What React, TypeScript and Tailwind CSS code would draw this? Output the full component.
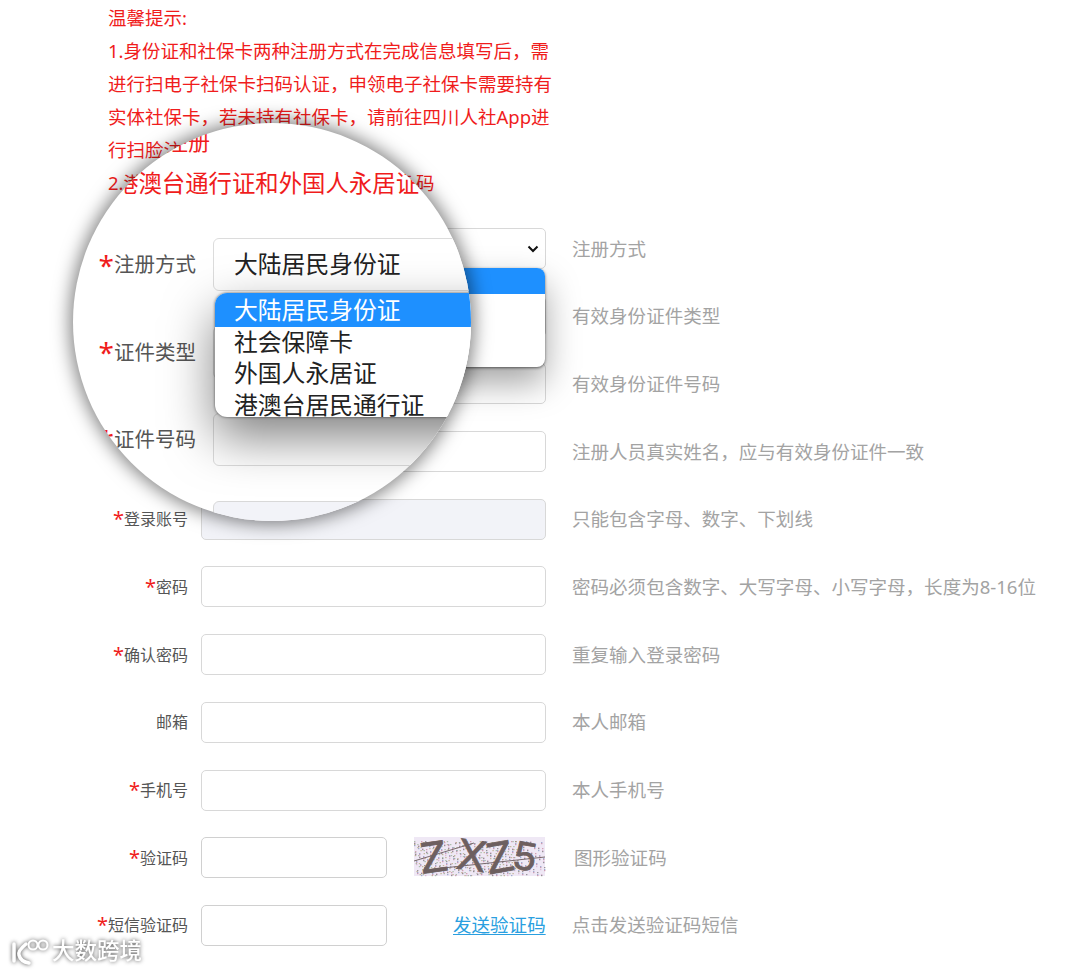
const rows = [
  { label: '注册方式', hint: '注册方式', required: true },
  { label: '证件类型', hint: '有效身份证件类型', required: true },
  { label: '证件号码', hint: '有效身份证件号码', required: true },
  { label: '姓名', hint: '注册人员真实姓名，应与有效身份证件一致', required: true },
  { label: '登录账号', hint: '只能包含字母、数字、下划线', required: true, disabled: true },
  { label: '密码', hint: '密码必须包含数字、大写字母、小写字母，长度为8-16位', required: true },
  { label: '确认密码', hint: '重复输入登录密码', required: true },
  { label: '邮箱', hint: '本人邮箱', required: false },
  { label: '手机号', hint: '本人手机号', required: true },
]

const options = ['社会保障卡', '外国人永居证', '港澳台居民通行证']

// fixed scatter so the captcha noise is the same on every render
const noise = Array.from({ length: 640 }, (_, i) => ({
  x: ((i * 37) % 131) * (i % 3 === 0 ? 0.8 : 1),
  y: 4 + (i * 61 + (i % 7) * 5) % 35,
  c: ['#7fa37c', '#c0708a', '#6a86b8', '#a8965e', '#5c5c5c', '#d0a0c0'][i % 6],
}))

function Label({ text, required }: { text: string; required: boolean }) {
  return (
    <label className="flex items-center justify-end whitespace-nowrap text-[16px] text-[#555]">
      {required && <span className="text-[20px] leading-none text-[#f01c1c]">*</span>}
      {text}
    </label>
  )
}

function Captcha() {
  return (
    <svg width="131" height="39" viewBox="0 0 131 39" className="overflow-visible bg-[#efe8f5]">
      {noise.map((n, i) => (
        <rect key={i} x={n.x} y={n.y} width="1.4" height="1.2" fill={n.c} opacity="0.6" />
      ))}
      <path d="M0 24 L60 6 M20 32 L131 20" stroke="#77686c" strokeWidth="1" fill="none" />
      <g fill="#6d5f60" stroke="#6d5f60" strokeWidth="0.8" fontFamily="Liberation Sans" fontSize="44">
        <text x="6" y="35" transform="rotate(-8 20 20)">Z</text>
        <text x="43" y="33" transform="rotate(8 55 20)">X</text>
        <text x="72" y="36" transform="rotate(-10 80 20)">Z</text>
        <text x="100" y="33" transform="rotate(10 112 20)" fontSize="40">5</text>
      </g>
    </svg>
  )
}

function Lens() {
  return (
    <div className="absolute left-[73px] top-[123px] z-20 h-[398px] w-[398px] overflow-hidden rounded-full bg-white shadow-[0_0_18px_3px_rgba(0,0,0,0.5)]">
      <span className="absolute left-[93px] top-[7px] whitespace-nowrap text-[22px] leading-[22px] text-[#f01c1c]">
        注册
      </span>
      <span className="absolute left-[42px] top-[44px] whitespace-nowrap text-[23.4px] leading-[32px] text-[#f01c1c]">
        港澳台通行证和外国人永居证
      </span>
      <div className="flex flex-col gap-y-[34.5px] pt-[115px]">
        {['注册方式', '证件类型', '证件号码'].map((text) => (
          <div key={text} className="grid h-[53px] grid-cols-[123px_500px] gap-x-[17px]">
            <label className="flex items-center justify-end whitespace-nowrap text-[20.5px] text-[#555]">
              <span className="text-[28px] leading-none text-[#f01c1c]">*</span>
              {text}
            </label>
            <div className="flex items-center rounded-md border border-[#dcdcdc] bg-white pl-5 pt-px text-[23.8px] text-[#222]">
              {text === '注册方式' && '大陆居民身份证'}
            </div>
          </div>
        ))}
        <div className="ml-[140px] h-[53px] w-[500px] rounded-md border border-[#d8d8d8] bg-[#f2f3f8]" />
      </div>
      <div className="absolute left-[142px] top-[170px] h-[124px] w-[500px] overflow-hidden rounded-xl bg-white text-[23.8px] leading-[31.5px] text-[#222] shadow-[0_0_3px_rgba(0,0,0,0.6),0_20px_50px_rgba(0,0,0,0.5)]">
        <div className="bg-[#1e90ff] pl-[19px] pt-[2px] text-white">大陆居民身份证</div>
        {options.map((o) => (
          <div key={o} className="pl-[19px]">{o}</div>
        ))}
      </div>
    </div>
  )
}

function Watermark() {
  return (
    <div className="absolute left-[8px] top-[935px] z-30 flex items-center gap-[2px] text-white [filter:drop-shadow(0_0_2px_rgba(0,0,0,0.7))]">
      <svg width="42" height="32" viewBox="0 0 42 32" fill="none" stroke="currentColor" strokeWidth="3.5" strokeLinecap="round">
        <path d="M6 9 V26" />
        <path d="M18 9 C12 14 10 17 11 20 C12 24 15 27 21 28" />
        <circle cx="25" cy="10" r="4.5" strokeWidth="2" />
        <circle cx="35" cy="10" r="4.5" strokeWidth="2" />
      </svg>
      <span className="text-[22.5px] font-medium leading-[30px]">大数跨境</span>
    </div>
  )
}

export default function App() {
  return (
    <div className="relative h-[971px] w-[1080px] overflow-hidden bg-white font-['Noto_Sans','Noto_Sans_CJK_SC',sans-serif]">
      <div className="ml-[108px] w-[447px] pt-[1px] text-[18.5px] leading-[33px] text-[#f01c1c]">
        <p>温馨提示:</p>
        <p>1.身份证和社保卡两种注册方式在完成信息填写后，需进行扫电子社保卡扫码认证，申领电子社保卡需要持有实体社保卡，若未持有社保卡，请前往四川人社App进行扫脸注册</p>
        <p className="whitespace-nowrap">2.<span className="tracking-[4px]">港澳台通行证和外国人永居证码</span></p>
      </div>

      <div className="mt-[29px] flex flex-col gap-y-[26.7px]">
        {rows.map((row, i) => (
          <div key={row.label} className="grid h-[41px] grid-cols-[188px_345px_1fr] gap-x-[13px]">
            <Label text={row.label} required={row.required} />
            <div className={`relative flex items-center justify-end rounded-[5px] border border-[#d8d8d8] pr-[6px] ${row.disabled ? 'bg-[#f2f3f8]' : 'bg-white'} ${i === 0 ? 'z-10' : ''}`}>
              {i === 0 && (
                <>
                  <svg width="12" height="10" viewBox="0 0 12 10" fill="none" stroke="#111" strokeWidth="2">
                    <path d="M1.5 2.5 L6 7 L10.5 2.5" />
                  </svg>
                  <div className="absolute right-0 top-[39px] h-[99px] w-[330px] overflow-hidden rounded-lg bg-white shadow-[0_1px_3px_rgba(0,0,0,0.55),0_16px_34px_rgba(0,0,0,0.36)]">
                    <div className="h-[26px] bg-[#1e90ff]" />
                  </div>
                </>
              )}
            </div>
            <span className="ml-[13px] self-center whitespace-nowrap text-[18.55px] text-[#a3a3a3]">{row.hint}</span>
          </div>
        ))}

        <div className="grid h-[41px] grid-cols-[188px_186px_131px_1fr] gap-x-[13px]">
          <Label text="验证码" required />
          <div className="rounded-[5px] border border-[#d0d0d0] bg-white" />
          <div className="ml-[14px]"><Captcha /></div>
          <span className="ml-[30px] self-center whitespace-nowrap text-[18.55px] text-[#a3a3a3]">图形验证码</span>
        </div>

        <div className="grid h-[41px] grid-cols-[188px_186px_1fr] gap-x-[13px]">
          <Label text="短信验证码" required />
          <div className="rounded-[5px] border border-[#d0d0d0] bg-white" />
          <div className="flex items-center whitespace-nowrap text-[18.55px]">
            <a href="#send" className="ml-[53px] text-[#2a9fe0] underline underline-offset-2">发送验证码</a>
            <span className="ml-[26px] text-[#a3a3a3]">点击发送验证码短信</span>
          </div>
        </div>
      </div>

      <Lens />
      <Watermark />
    </div>
  )
}
